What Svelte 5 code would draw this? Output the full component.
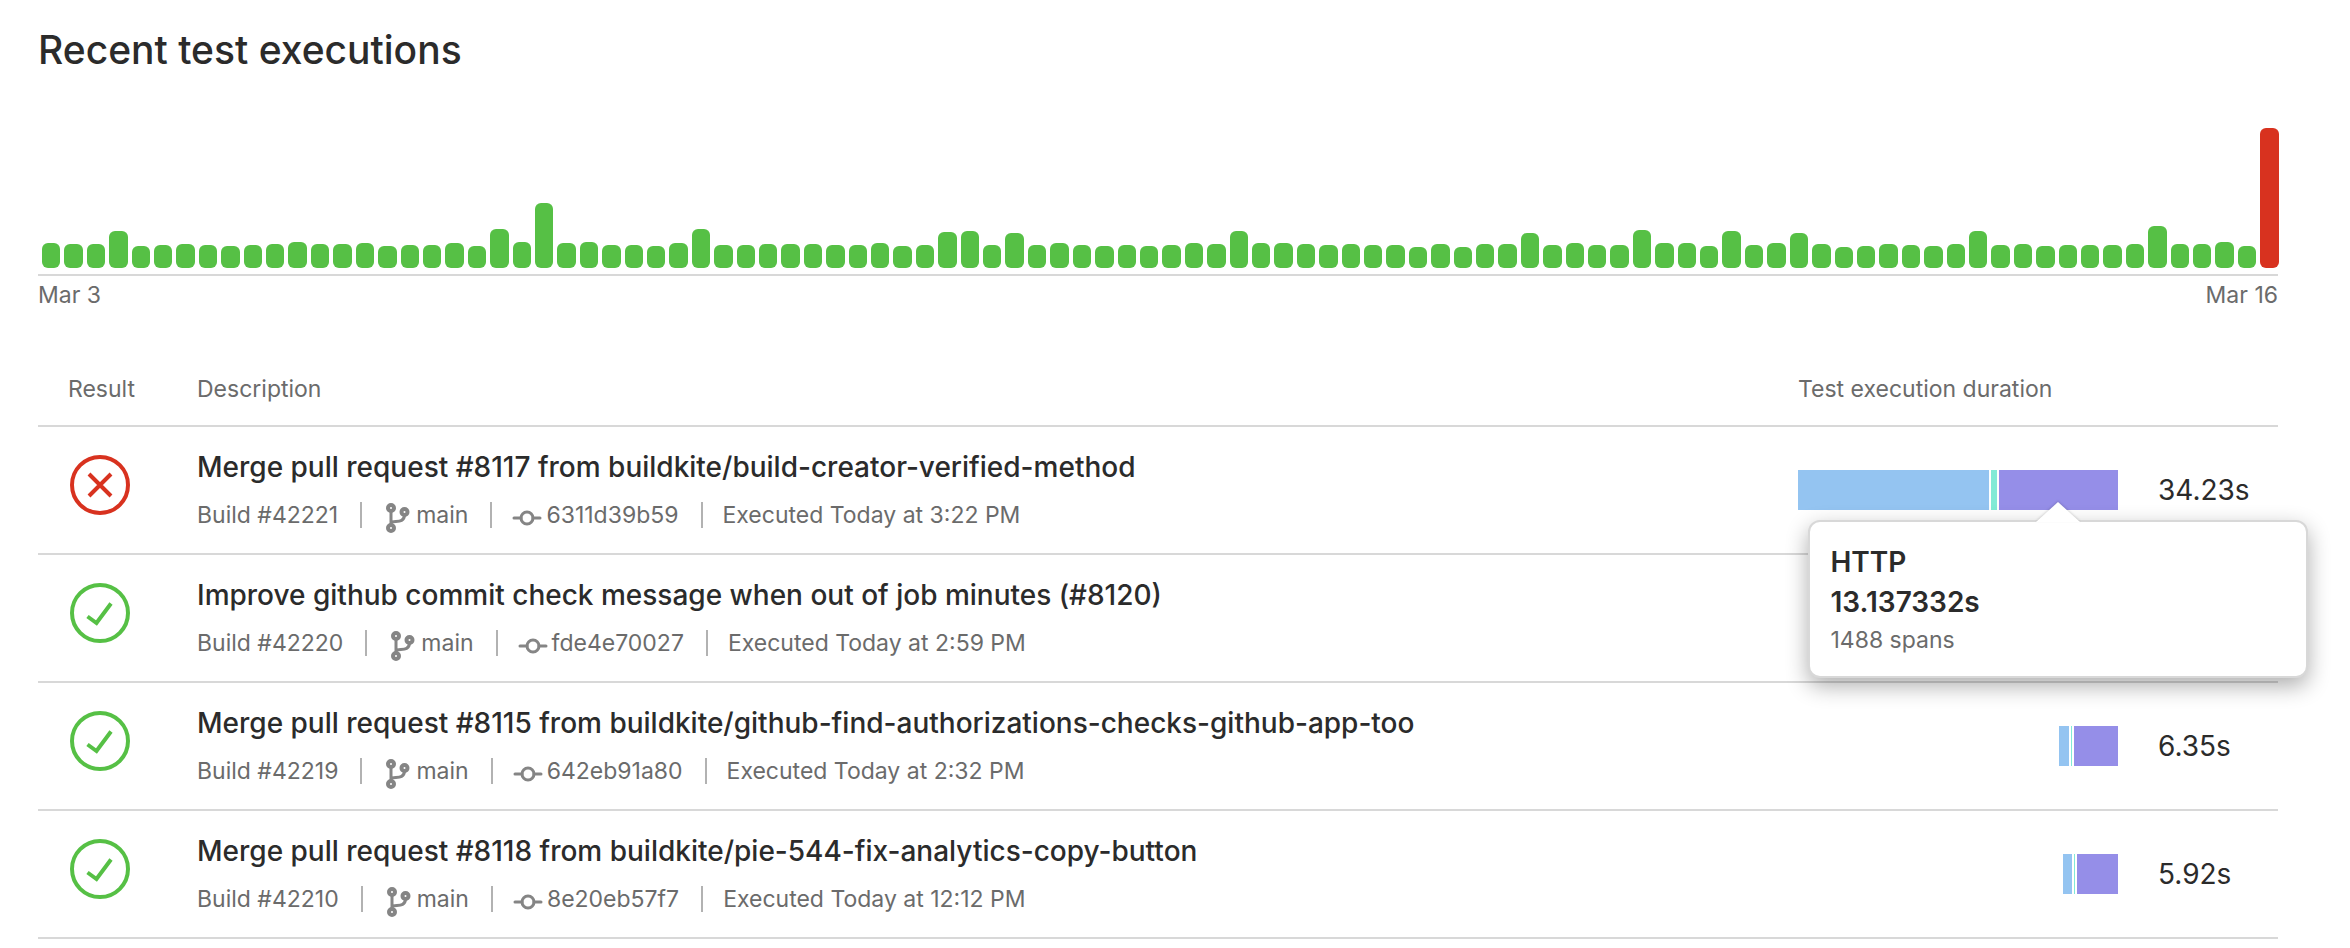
<script>
  const heights = [
    25, 24, 24, 37, 22, 23, 24, 23, 22, 23, 24, 26, 24, 24, 25, 22, 23, 23, 25, 22,
    39, 26, 65, 25, 26, 23, 23, 22, 25, 39, 23, 23, 24, 24, 24, 23, 23, 25, 22, 23,
    36, 37, 23, 35, 23, 25, 23, 22, 23, 22, 23, 25, 24, 37, 25, 25, 24, 23, 24, 23,
    23, 21, 24, 21, 24, 24, 35, 23, 25, 23, 23, 38, 25, 25, 22, 37, 23, 25, 35, 24,
    21, 22, 24, 23, 22, 24, 37, 23, 24, 22, 23, 23, 23, 24, 42, 24, 24, 26, 22, 140
  ];

  // Segment sizes are in the same unit as the 320-unit track.
  const track = 320;

  const executions = [
    {
      passed: false,
      title: 'Merge pull request #8117 from buildkite/build-creator-verified-method',
      build: 42221,
      commit: '6311d39b59',
      time: 'Today at 3:22 PM',
      duration: '34.23s',
      segments: [191, 6, 119],
      tip: { name: 'HTTP', time: '13.137332s', spans: '1488 spans' }
    },
    {
      passed: true,
      title: 'Improve github commit check message when out of job minutes (#8120)',
      build: 42220,
      commit: 'fde4e70027',
      time: 'Today at 2:59 PM',
      duration: '',
      segments: []
    },
    {
      passed: true,
      title: 'Merge pull request #8115 from buildkite/github-find-authorizations-checks-github-app-too',
      build: 42219,
      commit: '642eb91a80',
      time: 'Today at 2:32 PM',
      duration: '6.35s',
      segments: [10, 1, 44]
    },
    {
      passed: true,
      title: 'Merge pull request #8118 from buildkite/pie-544-fix-analytics-copy-button',
      build: 42210,
      commit: '8e20eb57f7',
      time: 'Today at 12:12 PM',
      duration: '5.92s',
      segments: [9, 1, 41]
    }
  ];
  const kinds = ['sql', 'sleep', 'http'];
</script>

<main>
  <h1>Recent test executions</h1>

  <section class="chart" aria-label="Test execution durations">
    <div class="bars">
      {#each heights as h, i}
        <span class="bar" class:failed={i === heights.length - 1} style="height: {h}px"></span>
      {/each}
    </div>
    <div class="range"><span>Mar 3</span><span>Mar 16</span></div>
  </section>

  <table>
    <colgroup>
      <col class="c-result" /><col /><col class="c-bar" /><col class="c-value" />
    </colgroup>
    <thead>
      <tr>
        <th class="result">Result</th>
        <th>Description</th>
        <th colspan="2">Test execution duration</th>
      </tr>
    </thead>
    <tbody>
      {#each executions as e}
        <tr>
          <td class="icon">
            <svg class="status" class:failed={!e.passed} viewBox="0 0 60 60" role="img" aria-label={e.passed ? 'Passed' : 'Failed'}>
              <circle cx="30" cy="30" r="28" />
              {#if e.passed}
                <path d="M17.5 33.5 26.5 40 41 20.500" />
              {:else}
                <path d="M19 19 41 41M41 19 19 41" />
              {/if}
            </svg>
          </td>
          <td>
            <div class="title">{e.title}</div>
            <ul class="meta">
              <li>Build #{e.build}</li>
              <li class="branch">
                <svg viewBox="0 0 24 30" aria-hidden="true">
                  <circle cx="5" cy="5" r="3" />
                  <circle cx="5" cy="25" r="3" />
                  <circle cx="18.500" cy="9" r="3" />
                  <path d="M5 8V22M5 20C7 17 18.500 21 18.500 12" />
                </svg>main
              </li>
              <li class="commit">
                <svg viewBox="0 0 30 16" aria-hidden="true">
                  <circle cx="15" cy="8" r="6" />
                  <path d="M2 8H9M21 8H28" />
                </svg>{e.commit}
              </li>
              <li>Executed {e.time}</li>
            </ul>
          </td>
          <td>
            <div class="track">
              {#each e.segments as s, i}
                <div class="segment {kinds[i]}" style="width: {(s / track) * 100}%">
                  {#if e.tip && kinds[i] === 'http'}
                    <div class="tip" role="tooltip">
                      <svg class="arrow" viewBox="0 0 44 20" aria-hidden="true">
                        <path d="M0 20 22 0 44 20Z" />
                      </svg>
                      <strong>{e.tip.name}</strong>
                      <strong>{e.tip.time}</strong>
                      <small>{e.tip.spans}</small>
                    </div>
                  {/if}
                </div>
              {/each}
            </div>
          </td>
          <td class="value">{e.duration}</td>
        </tr>
      {/each}
    </tbody>
  </table>
</main>

<style>
  :global(body) {
    background: #fff;
  }
  main {
    padding: 26px 72px 10px 38px;
    font-family: Inter, sans-serif;
    font-size: 23px;
    line-height: 32px;
    color: #6b6b6b;
  }
  h1 {
    margin: 0;
    font-size: 39px;
    line-height: 48px;
    font-weight: 500;
    color: #2b2b2b;
  }
  .chart {
    padding-top: 54px;
  }
  .bars {
    display: flex;
    align-items: flex-end;
    gap: 4px;
    height: 140px;
    padding: 0 0 6px 4px;
    border-bottom: 2px solid #d8d8d8;
  }
  .bar {
    flex: 1 1 0;
    border-radius: 6px;
    background: #56c045;
  }
  .bar.failed {
    background: #d8321f;
  }
  .range {
    display: flex;
    justify-content: space-between;
    padding-top: 3px;
  }
  table {
    width: 100%;
    margin-top: 44px;
    border-collapse: collapse;
    table-layout: fixed;
  }
  .c-result {
    width: 159px;
  }
  .c-bar {
    width: 360px;
  }
  .c-value {
    width: 120px;
  }
  tr {
    border-bottom: 2px solid #d8d8d8;
  }
  th {
    height: 68px;
    padding: 0 0 2px;
    font-weight: 400;
    text-align: left;
    vertical-align: middle;
  }
  td {
    height: 126px;
    padding: 0;
    vertical-align: middle;
  }
  .result {
    padding-left: 30px;
  }
  .icon {
    padding-left: 32px;
  }
  .status {
    display: block;
    width: 60px;
    height: 60px;
    margin-bottom: 10px;
    fill: none;
    stroke: #56c045;
    stroke-width: 4;
  }
  .status.failed {
    stroke: #d8321f;
  }
  .title {
    font-size: 28px;
    line-height: 40px;
    font-weight: 500;
    color: #2b2b2b;
  }
  .meta {
    display: flex;
    align-items: center;
    gap: 22px;
    margin: 10px 0 0;
    padding: 0;
    list-style: none;
  }
  .meta li {
    display: flex;
    align-items: center;
  }
  .meta li + li::before {
    content: '';
    width: 2px;
    height: 26px;
    margin-right: 20px;
    background: #b2b2b2;
  }
  .meta svg {
    flex: none;
    fill: none;
    stroke: #858585;
  }
  .branch svg {
    width: 24px;
    height: 30px;
    margin: 6px 6px 0 4px;
    stroke-width: 4;
  }
  .branch path {
    stroke-width: 3;
  }
  .commit svg {
    width: 30px;
    height: 16px;
    margin: 6px 4px 0 0;
    stroke-width: 3;
    stroke-linecap: round;
  }
  .track {
    display: flex;
    justify-content: flex-end;
    gap: 2px;
    width: 320px;
    height: 40px;
  }
  .segment {
    position: relative;
  }
  .sql {
    background: #94c4f1;
  }
  .sleep {
    background: #82ead6;
  }
  .http {
    background: #958ee8;
  }
  .value {
    font-size: 28px;
    color: #2b2b2b;
  }
  .tip {
    position: absolute;
    top: 50px;
    left: 50%;
    z-index: 1;
    display: flex;
    flex-direction: column;
    box-sizing: border-box;
    width: 500px;
    padding: 20px 20px 18px;
    transform: translateX(-50%);
    border: 2px solid #d8d8d8;
    border-radius: 12px;
    background: #fff;
    box-shadow: 0 8px 22px rgba(0, 0, 0, 0.32);
  }
  .tip strong {
    font-size: 28px;
    line-height: 40px;
    font-weight: 600;
    color: #2b2b2b;
  }
  .tip small {
    font-size: 23px;
    line-height: 36px;
    color: #6b6b6b;
  }
  .arrow {
    position: absolute;
    top: -20px;
    left: 50%;
    width: 44px;
    height: 20px;
    transform: translateX(-50%);
    fill: #fff;
    filter: drop-shadow(0 -1px 1px rgba(0, 0, 0, 0.15));
  }
</style>
